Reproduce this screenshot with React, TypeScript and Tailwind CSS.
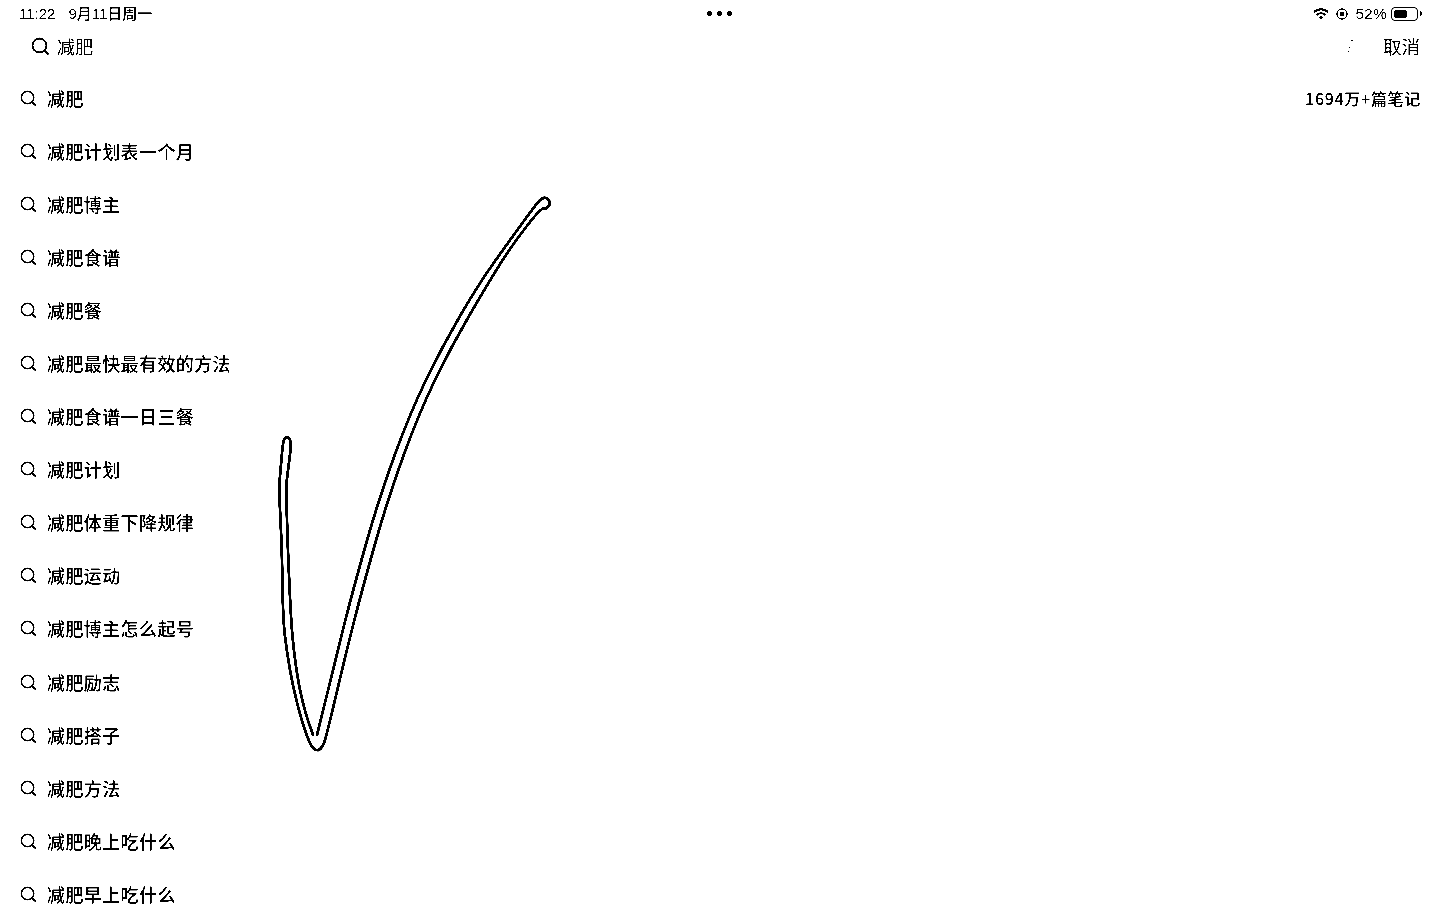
import React from "react";

const items = [
  "减肥",
  "减肥计划表一个月",
  "减肥博主",
  "减肥食谱",
  "减肥餐",
  "减肥最快最有效的方法",
  "减肥食谱一日三餐",
  "减肥计划",
  "减肥体重下降规律",
  "减肥运动",
  "减肥博主怎么起号",
  "减肥励志",
  "减肥搭子",
  "减肥方法",
  "减肥晚上吃什么",
  "减肥早上吃什么",
];

function Search({ size = 17 }: { size?: number }) {
  return (
    <svg width={size} height={size} viewBox="0 0 17 17" fill="none" stroke="#000" strokeWidth="1.7" className="shrink-0">
      <circle cx="8" cy="8" r="6.6" />
      <path d="M12.6 12.6 L16 16" strokeLinecap="round" />
    </svg>
  );
}

const pts: [number, number][] = [
  [317, 735], [337, 653], [353, 590], [379, 498], [410, 413], [442, 347], [478, 285], [510, 240], [537, 203],
  [543, 197], [549, 199], [550, 205], [546, 209], [541, 208],
  [512, 245], [487, 285], [451, 347], [419, 413], [388, 498], [362, 590], [346, 653], [326, 738],
  [322, 748], [317, 751], [311, 747], [302, 722], [293, 687], [287, 653], [283, 620], [282, 553], [280, 510], [279, 487], [281, 465], [283, 441],
  [286, 437], [290, 438], [291, 447], [288, 470], [286, 487], [287, 520], [288, 553], [291, 620], [294, 653], [299, 687], [306, 715], [313, 735],
];

function smooth(p: [number, number][]) {
  let d = `M${p[0][0]} ${p[0][1]}`;
  for (let i = 1; i < p.length - 1; i++) {
    const mx = (p[i][0] + p[i + 1][0]) / 2;
    const my = (p[i][1] + p[i + 1][1]) / 2;
    d += ` Q${p[i][0]} ${p[i][1]} ${mx} ${my}`;
  }
  const l = p[p.length - 1];
  return d + ` L${l[0]} ${l[1]}`;
}

export default function App() {
  return (
    <div
      className="relative h-[906px] w-[1439px] overflow-hidden bg-white text-black contrast-[8]"
      style={{ fontFamily: '"Noto Sans CJK SC", "Liberation Sans", sans-serif' }}
    >
      <div className="flex h-[27px] items-center justify-between pl-[19px] pr-[21px] text-[15px] font-medium leading-none">
        <div className="flex gap-[13px]" style={{ fontFamily: '"Liberation Sans", "Noto Sans CJK SC", sans-serif' }}>
          <span>11:22</span>
          <span>9月11日周一</span>
        </div>
        <div className="absolute left-[707px] top-[11px] flex gap-[5px]">
          <span className="h-[5px] w-[5px] rounded-full bg-black" />
          <span className="h-[5px] w-[5px] rounded-full bg-black" />
          <span className="h-[5px] w-[5px] rounded-full bg-black" />
        </div>
        <div className="flex items-center" style={{ fontFamily: '"Liberation Sans", sans-serif' }}>
          <svg width="16" height="12" viewBox="0 0 16 12" className="mr-[7px]" fill="none" stroke="#000" strokeWidth="2">
            <path d="M1 4.2 A10 10 0 0 1 15 4.2" />
            <path d="M3.8 7 A6 6 0 0 1 12.2 7" />
            <path d="M8 11.5 L5.8 9.3 A3 3 0 0 1 10.2 9.3 Z" fill="#000" stroke="none" />
          </svg>
          <svg width="12" height="12" viewBox="0 0 13 13" className="mr-[7px]" fill="none" stroke="#000">
            <circle cx="6.5" cy="6.5" r="5.5" strokeWidth="1.4" />
            <circle cx="6.5" cy="6.5" r="2.6" fill="#000" stroke="none" />
          </svg>
          <span className="mr-[4px] text-[15px] tracking-[0.5px]">52%</span>
          <div className="relative h-[14px] w-[27px] rounded-[4px] border border-black p-[2px]">
            <div className="h-full w-[13px] rounded-[2px] bg-black" />
            <div className="absolute -right-[5px] top-[3px] h-[5px] w-[2px] rounded-r bg-black" />
          </div>
        </div>
      </div>

      <div className="flex h-[38px] items-center justify-between pl-[31px] pr-[19px]">
        <div className="flex items-center gap-[8px] text-[18px] leading-none tracking-[0.2px]">
          <Search size={18} />
          <span>减肥</span>
        </div>
        <span className="text-[18.5px] leading-none">取消</span>
      </div>

      <div className="absolute left-[1347px] top-[40px] h-[15px] w-[8px]">
        <span className="absolute left-[4px] top-0 h-[1px] w-[2px] bg-black" />
        <span className="absolute left-[2px] top-[7px] h-[1px] w-[1px] bg-black" />
        <span className="absolute left-[1px] top-[11px] h-[1px] w-[1px] bg-black" />
      </div>

      <div className="pl-[20px] pr-[18px] pt-[6px]">
        {items.map((t, i) => (
          <div key={t} className="flex h-[53.1px] items-center">
            <Search size={16} />
            <span className="ml-[11px] text-[18px] font-medium leading-none tracking-[0.4px]">{t}</span>
            {i === 0 && <span className="ml-auto text-[16px] font-medium leading-none tracking-[0.7px]">1694万+篇笔记</span>}
          </div>
        ))}
      </div>

      <svg className="pointer-events-none absolute left-0 top-0" width="1439" height="906" fill="none">
        <path d={smooth(pts)} stroke="#000" strokeWidth="2.8" strokeLinejoin="round" strokeLinecap="round" />
      </svg>
    </div>
  );
}
